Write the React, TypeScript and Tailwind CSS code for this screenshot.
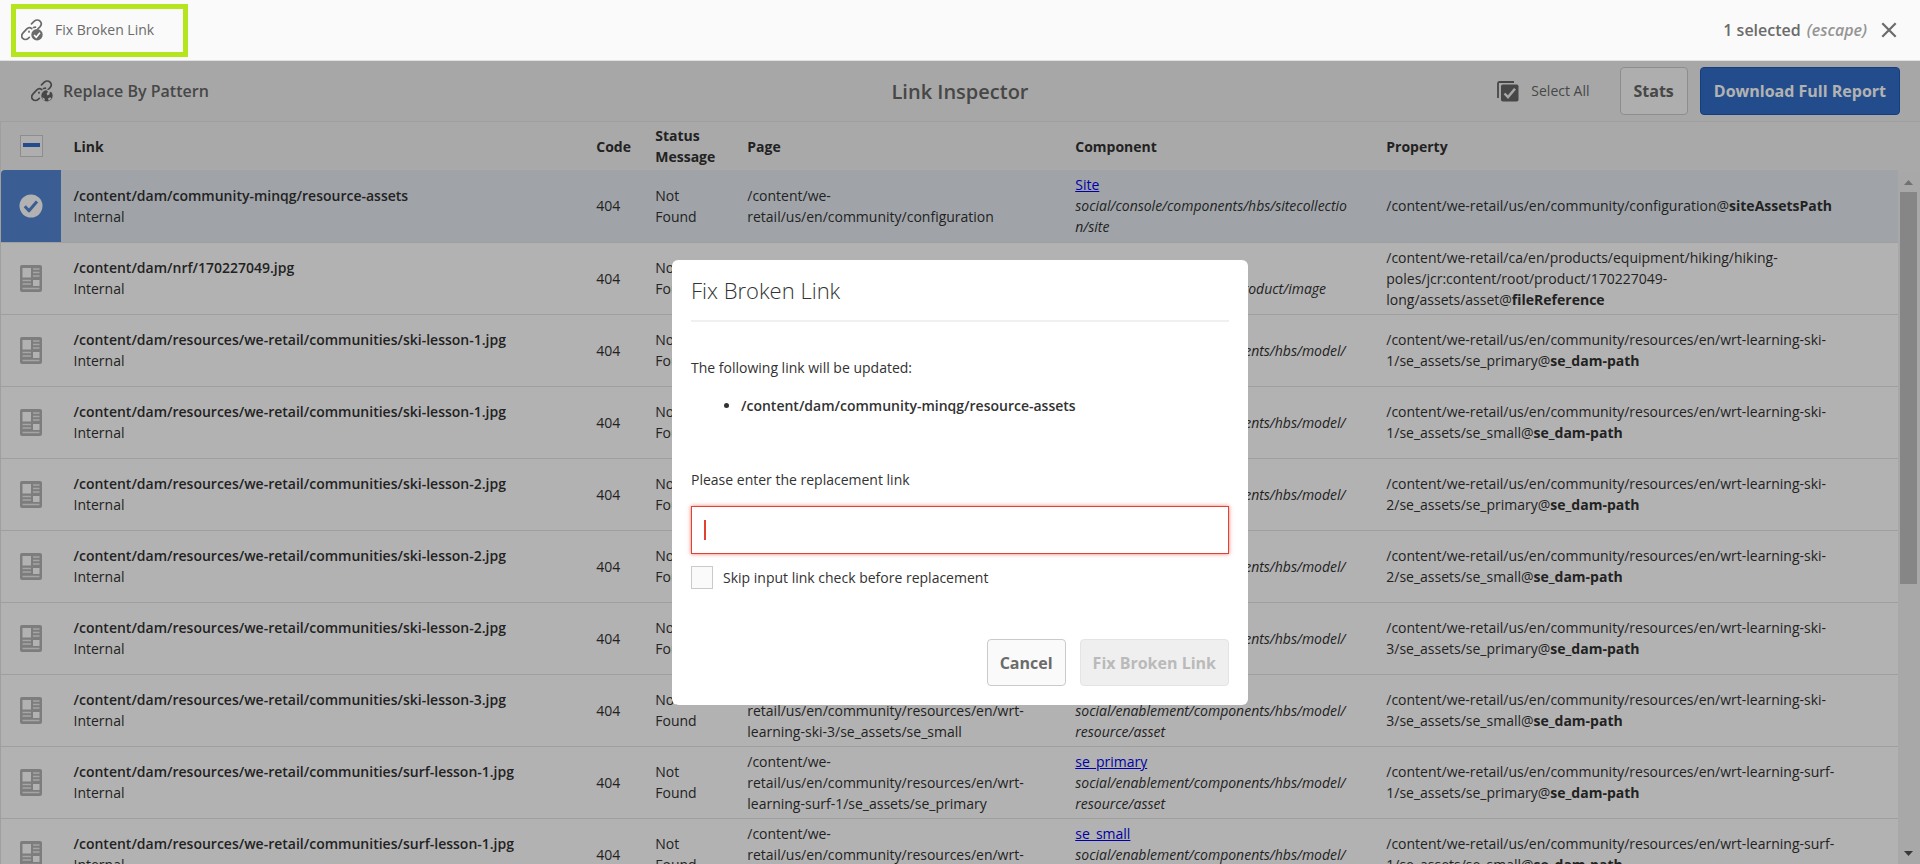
import { useEffect, useState } from "react"
import clsx from "clsx"

interface BrokenLink {
  id: number
  link: string
  page: string
  component: {
    name: string
    type: string
  }
  property: {
    path: string
    name: string
  }
}

const MODEL = "social/enablement/components/hbs/model/resource/asset"
const DAM = "/content/dam/resources/we-retail/communities/"
const RESOURCES = "/content/we-retail/us/en/community/resources/en/"

const brokenLinks: BrokenLink[] = [
  {
    id: 1,
    link: "/content/dam/community-minqg/resource-assets",
    page: "/content/we-retail/us/en/community/configuration",
    component: { name: "Site", type: "social/console/components/hbs/sitecollection/site" },
    property: { path: "/content/we-retail/us/en/community/configuration", name: "siteAssetsPath" }
  },
  {
    id: 2,
    link: "/content/dam/nrf/170227049.jpg",
    page: "/content/we-retail/ca/en/products/equipment/hiking",
    component: { name: "asset", type: "enablement/components/product/image" },
    property: {
      path: "/content/we-retail/ca/en/products/equipment/hiking/hiking-poles/jcr:content/root/product/170227049-long/assets/asset",
      name: "fileReference"
    }
  },
  {
    id: 3,
    link: DAM + "ski-lesson-1.jpg",
    page: RESOURCES + "wrt-learning-ski-1/se_assets/se_primary",
    component: { name: "se_primary", type: MODEL },
    property: { path: RESOURCES + "wrt-learning-ski-1/se_assets/se_primary", name: "se_dam-path" }
  },
  {
    id: 4,
    link: DAM + "ski-lesson-1.jpg",
    page: RESOURCES + "wrt-learning-ski-1/se_assets/se_small",
    component: { name: "se_small", type: MODEL },
    property: { path: RESOURCES + "wrt-learning-ski-1/se_assets/se_small", name: "se_dam-path" }
  },
  {
    id: 5,
    link: DAM + "ski-lesson-2.jpg",
    page: RESOURCES + "wrt-learning-ski-2/se_assets/se_primary",
    component: { name: "se_primary", type: MODEL },
    property: { path: RESOURCES + "wrt-learning-ski-2/se_assets/se_primary", name: "se_dam-path" }
  },
  {
    id: 6,
    link: DAM + "ski-lesson-2.jpg",
    page: RESOURCES + "wrt-learning-ski-2/se_assets/se_small",
    component: { name: "se_small", type: MODEL },
    property: { path: RESOURCES + "wrt-learning-ski-2/se_assets/se_small", name: "se_dam-path" }
  },
  {
    id: 7,
    link: DAM + "ski-lesson-2.jpg",
    page: RESOURCES + "wrt-learning-ski-3/se_assets/se_primary",
    component: { name: "se_primary", type: MODEL },
    property: { path: RESOURCES + "wrt-learning-ski-3/se_assets/se_primary", name: "se_dam-path" }
  },
  {
    id: 8,
    link: DAM + "ski-lesson-3.jpg",
    page: RESOURCES + "wrt-learning-ski-3/se_assets/se_small",
    component: { name: "se_small", type: MODEL },
    property: { path: RESOURCES + "wrt-learning-ski-3/se_assets/se_small", name: "se_dam-path" }
  },
  {
    id: 9,
    link: DAM + "surf-lesson-1.jpg",
    page: RESOURCES + "wrt-learning-surf-1/se_assets/se_primary",
    component: { name: "se_primary", type: MODEL },
    property: { path: RESOURCES + "wrt-learning-surf-1/se_assets/se_primary", name: "se_dam-path" }
  },
  {
    id: 10,
    link: DAM + "surf-lesson-1.jpg",
    page: RESOURCES + "wrt-learning-surf-1/se_assets/se_small",
    component: { name: "se_small", type: MODEL },
    property: { path: RESOURCES + "wrt-learning-surf-1/se_assets/se_small", name: "se_dam-path" }
  }
]

function ChainLinks() {
  return (
    <g fill="none" stroke="currentColor" strokeWidth="1.7" strokeLinecap="round" strokeLinejoin="round">
      <path d="M10.5 4.8 13.3 2.2C15 .7 17.5.6 19 2.1s1.5 3.9.1 5.5L16.800 10" />
      <path d="M8.300 18.400l-1.100.900c-1.600 1.500-4.100 1.400-5.400.100-1.400-1.500-1.200-3.900.300-5.500L5.600 10.200C7.100 8.700 9.300 8.500 10.700 9.600" />
      <path d="M12.500 8.500l2-.3M8 12.300v.6" />
    </g>
  )
}

function LinkCheckIcon() {
  return (
    <svg viewBox="0 0 22 22" className="size-[22px] shrink-0" aria-hidden="true">
      <ChainLinks />
      <circle cx="16" cy="15.8" r="5.7" fill="currentColor" />
      <path d="m13.1 16 2.1 2.2 3.8-4.5" fill="none" stroke="white" strokeWidth="1.6" />
    </svg>
  )
}

function LinkGlobeIcon() {
  return (
    <svg viewBox="0 0 22 22" className="size-[22px] shrink-0" aria-hidden="true">
      <ChainLinks />
      <circle cx="16" cy="15.8" r="5.7" fill="currentColor" />
      <path
        d="M15.200 10l1.900 1.800-1.500 1.700.8 1.900 2-.9.400-2.300 1.400-.5-1.600-1.900zM11 17.200l2.400 1 .600 2.400-1.700-.6zM17 18.400l2.200-1.200 1.300 1.200-2.700 2.600z"
        fill="#f0f0f0"
      />
    </svg>
  )
}

function SelectAllIcon() {
  return (
    <svg viewBox="0 0 22 21" className="h-[21px] w-[22px] shrink-0" aria-hidden="true">
      <path d="M1 17V2.5C1 1.6 1.6 1 2.5 1H17" fill="none" stroke="currentColor" strokeWidth="1.8" />
      <rect x="4" y="3.5" width="17.5" height="17" rx="1.8" fill="currentColor" />
      <path d="m7.500 12.500 3.500 3.600 7-8.300" fill="none" stroke="#f0f0f0" strokeWidth="2.5" />
    </svg>
  )
}

function PageIcon() {
  return (
    <svg viewBox="0 0 22 27" className="ml-[19px] h-[27px] w-[22px] text-[#b4b4b4]" aria-hidden="true">
      <rect width="22" height="27" rx="2" fill="currentColor" />
      <path d="M2.500 3h8.500v9.500H2.500zM13 15h6.500v6H13z" fill="white" />
      <path
        d="M13 4h6.500M13 7.500h6.500M13 11h6.500M2.500 15.500h8.500M2.500 19h8.500M2.500 23.500h17"
        stroke="#ececec"
        strokeWidth="1.4"
      />
    </svg>
  )
}

function CheckCircle() {
  return (
    <svg viewBox="0 0 24 24" className="ml-[18px] size-6" aria-hidden="true">
      <circle cx="12" cy="12" r="11.5" fill="white" />
      <path d="m5.800 12.300 4.200 4.500 8-9.300" fill="none" stroke="#5386d4" strokeWidth="3" strokeLinejoin="round" />
    </svg>
  )
}

function ActionBar() {
  return (
    <div className="flex h-[61px] shrink-0 items-center justify-between border-b border-[#e1e1e1] bg-[#fafafa] pr-[23px] pl-[11px] text-[#6b6b6b]">
      <button
        type="button"
        className="flex h-[53px] w-[177px] items-center gap-3 border-[5px] border-[#b5e61d] pl-[5px] text-sm"
      >
        <LinkCheckIcon />
        Fix Broken Link
      </button>
      <div className="flex items-center text-base">
        <span className="font-semibold">1 selected</span>
        <span className="ml-[6px] font-semibold text-[#959595] italic">(escape)</span>
        <button type="button" aria-label="Close" className="ml-[14px]">
          <svg viewBox="0 0 16 16" className="size-4" aria-hidden="true">
            <path d="m1.300 1.300 13.400 13.400M14.700 1.300 1.300 14.700" stroke="currentColor" strokeWidth="2.2" />
          </svg>
        </button>
      </div>
    </div>
  )
}

function Toolbar() {
  return (
    <header className="grid h-[61px] shrink-0 grid-cols-3 items-center border-b border-[#e4e4e4] bg-[#f0f0f0] px-5 text-[#666]">
      <button type="button" className="ml-[11px] flex items-center gap-[10px] justify-self-start text-base font-semibold">
        <LinkGlobeIcon />
        Replace By Pattern
      </button>
      <h1 className="pt-px text-center text-xl font-semibold">Link Inspector</h1>
      <div className="flex items-center justify-end">
        <button type="button" className="mr-[30px] flex items-center gap-3 text-sm">
          <SelectAllIcon />
          Select All
        </button>
        <button
          type="button"
          className="mr-3 h-12 rounded border border-[#cacaca] bg-[#fafafa] px-[13px] text-base font-bold"
        >
          Stats
        </button>
        <button
          type="button"
          className="h-12 rounded border border-[#1f5ab8] bg-[#326ec8] px-[13px] text-base font-bold text-white"
        >
          Download Full Report
        </button>
      </div>
    </header>
  )
}

function LinkTable({ selected }: { selected: number }) {
  return (
    <table className="w-full table-fixed border-l border-[#e4e4e4] text-left text-sm leading-[21px]">
      <colgroup>
        <col className="w-[60px]" />
        <col />
        <col className="w-[59px]" />
        <col className="w-[92px]" />
        <col className="w-[328px]" />
        <col className="w-[311px]" />
        <col />
      </colgroup>
      <thead className="bg-[#f3f3f3]">
        <tr className="h-12">
          <th>
            <span className="relative ml-[19px] block h-[22px] w-[23px]">
              <input
                type="checkbox"
                aria-label="Select all rows"
                className="block size-full appearance-none border border-[#cacaca] bg-[#fafafa]"
              />
              <span className="pointer-events-none absolute inset-x-[3px] top-[8px] h-1 bg-[#326ec8]" />
            </span>
          </th>
          <th className="px-[13px]">Link</th>
          <th className="px-3">Code</th>
          <th className="px-3">Status Message</th>
          <th className="px-3">Page</th>
          <th className="px-3">Component</th>
          <th className="px-3">Property</th>
        </tr>
      </thead>
      <tbody>
        {brokenLinks.map((item) => (
          <tr
            key={item.id}
            className={clsx("h-[72px] border-b border-[#e4e4e4]", item.id === selected ? "bg-[#e5ebf1]" : "bg-white")}
          >
            <td className={item.id === selected ? "rounded-tl bg-[#5386d4]" : ""}>
              {item.id === selected ? <CheckCircle /> : <PageIcon />}
            </td>
            <td className="px-[13px]">
              <div className="font-semibold">{item.link}</div>
              <div>Internal</div>
            </td>
            <td className="px-3">404</td>
            <td className="px-3">Not Found</td>
            <td className="pr-8 pl-3 break-words">{item.page}</td>
            <td className="pr-[27px] pl-3 break-words">
              <a href="#" className="text-[#0000ee] underline">
                {item.component.name}
              </a>
              <div className="italic">{item.component.type}</div>
            </td>
            <td className="pr-12 pl-3 break-words">
              {item.property.path}@<b>{item.property.name}</b>
            </td>
          </tr>
        ))}
      </tbody>
    </table>
  )
}

function Scrollbar() {
  return (
    <div className="flex w-[22px] shrink-0 flex-col bg-[#f3f3f3]" aria-hidden="true">
      <div className="h-[49px]" />
      <div className="flex min-h-0 flex-1 flex-col items-center bg-[#f1f1f1] pr-px">
        <svg viewBox="0 0 17 21" className="h-[21px] w-[17px]">
          <path d="m8.500 9 4.500 5H4z" fill="#a3a3a3" />
        </svg>
        <div className="h-[392px] w-[17px] bg-[#c1c1c1]" />
        <svg viewBox="0 0 17 21" className="mt-auto h-[21px] w-[17px]">
          <path d="m8.500 13 4.500-5H4z" fill="#505050" />
        </svg>
      </div>
    </div>
  )
}

function FixDialog({ link }: { link: string }) {
  const [replacement, setReplacement] = useState("")

  return (
    <div
      role="dialog"
      aria-labelledby="dialog-title"
      className="h-fit w-[576px] rounded-md bg-white px-[19px] pt-[14px] pb-[19px] text-sm leading-[21px] text-[#323232]"
    >
      <h2 id="dialog-title" className="border-b-2 border-[#f0f0f0] pb-[14px] text-[22px] leading-8 font-light">
        Fix Broken Link
      </h2>
      <p className="mt-[35px]">The following link will be updated:</p>
      <ul className="mt-[17px] list-disc pl-[50px]">
        <li className="font-semibold">{link}</li>
      </ul>
      <label htmlFor="replacement" className="mt-[53px] block">
        Please enter the replacement link
      </label>
      <div className="relative mt-4">
        <input
          id="replacement"
          type="text"
          value={replacement}
          onChange={(e) => setReplacement(e.target.value)}
          className="block h-12 w-full border border-[#e14132] px-3 text-base caret-[#e14132] shadow-[0_0_4px_rgba(225,65,50,0.7)] outline-none"
        />
        {replacement === "" && (
          <span className="pointer-events-none absolute top-[14px] left-[13px] h-5 w-[2px] bg-[#e14132]" />
        )}
      </div>
      <label className="mt-3 flex items-center gap-[10px]">
        <input type="checkbox" className="h-[23px] w-[22px] appearance-none border border-[#cacaca] bg-[#fafafa]" />
        Skip input link check before replacement
      </label>
      <div className="mt-[50px] flex justify-end gap-[14px] text-base font-bold">
        <button type="button" className="h-[47px] rounded border border-[#cacaca] bg-[#fafafa] px-3 text-[#6b6b6b]">
          Cancel
        </button>
        <button
          type="button"
          disabled
          className="h-[47px] rounded border border-[#e4e4e4] bg-[#efefef] px-3 text-[#bababa]"
        >
          Fix Broken Link
        </button>
      </div>
    </div>
  )
}

export default function App() {
  const selected = 1
  const current = brokenLinks.find((item) => item.id === selected)

  useEffect(() => {
    document.title = "Link Inspector"
  }, [])

  return (
    <div className="flex h-screen flex-col overflow-hidden font-['Open_Sans',sans-serif] text-[#323232]">
      <ActionBar />
      <div className="relative flex min-h-0 flex-1 flex-col">
        <Toolbar />
        <main className="flex min-h-0 flex-1">
          <div className="min-w-0 flex-1 overflow-hidden">
            <LinkTable selected={selected} />
          </div>
          <Scrollbar />
        </main>

        {/* Modal */}
        <div className="absolute inset-0 flex justify-center bg-black/30 pt-[199px]">
          {current && <FixDialog link={current.link} />}
        </div>
      </div>
    </div>
  )
}
